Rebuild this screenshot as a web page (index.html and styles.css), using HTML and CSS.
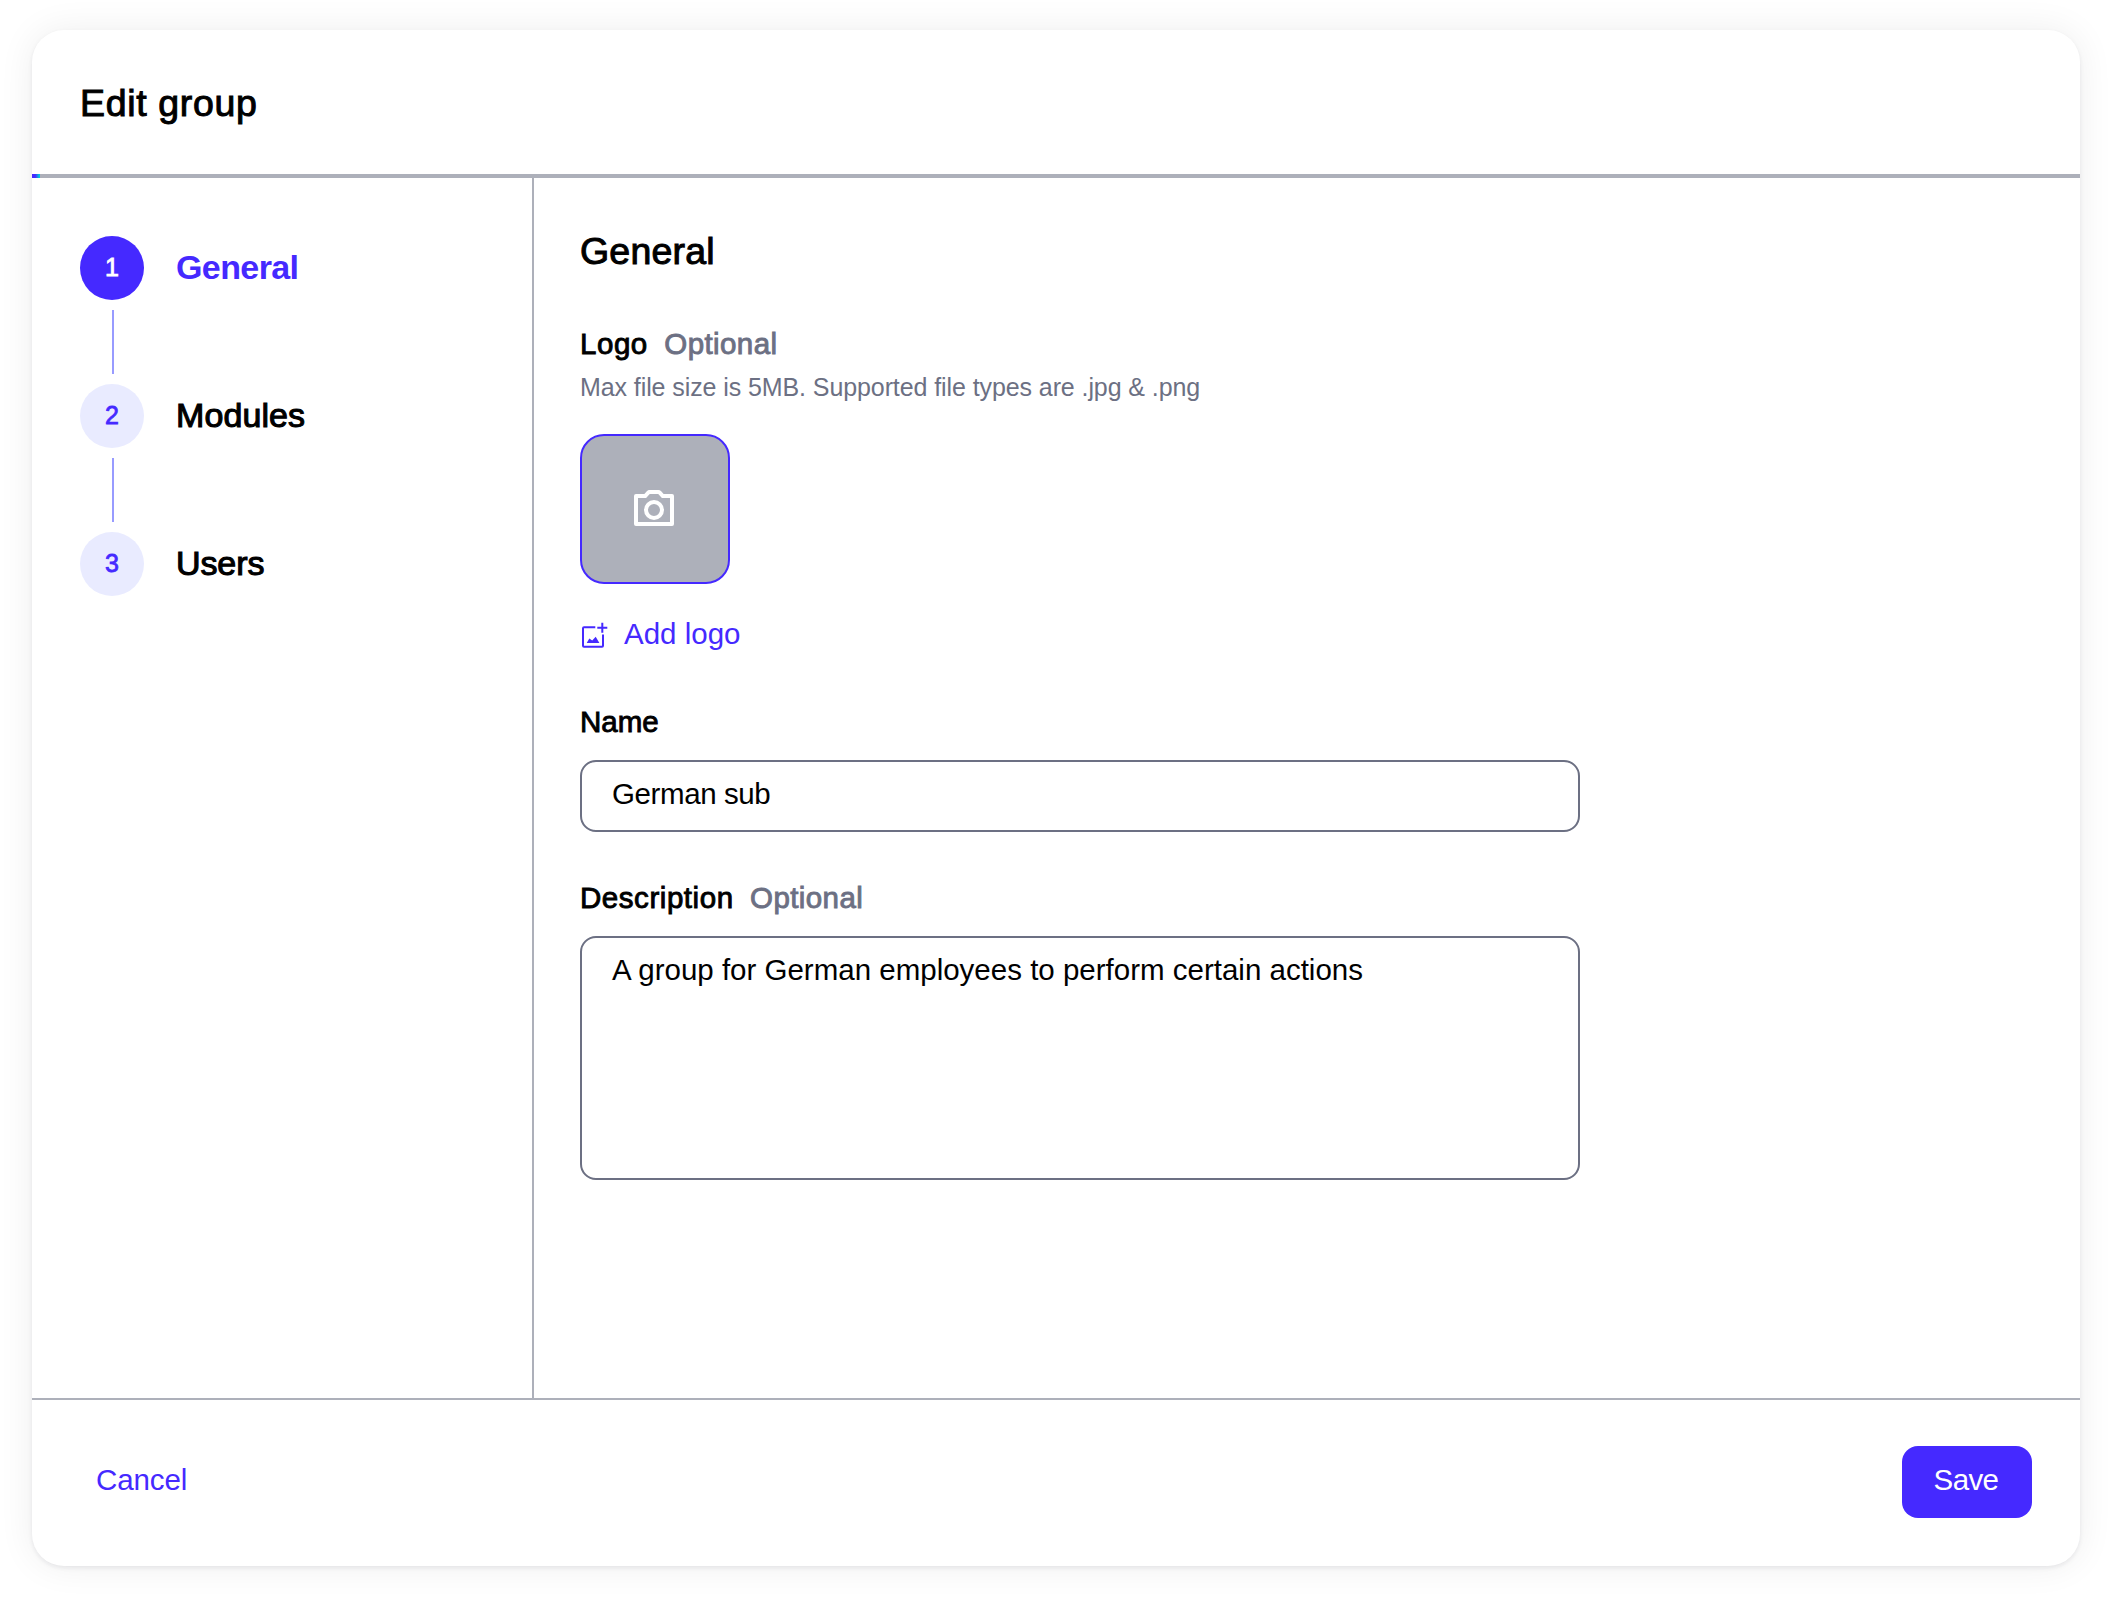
FILE: index.html
```html
<!DOCTYPE html>
<html lang="en">
<head>
<meta charset="utf-8">
<title>Edit group</title>
<link rel="stylesheet" href="styles.css">
</head>
<body>
<main class="card">
  <header class="card-header"><h1 class="title">Edit group</h1></header>
  <div class="progress"><div class="progress-fill"></div></div>
  <div class="body">
    <nav class="steps">
      <div class="step active"><span class="badge">1</span><span class="step-label">General</span></div>
      <div class="connector"></div>
      <div class="step"><span class="badge">2</span><span class="step-label">Modules</span></div>
      <div class="connector"></div>
      <div class="step"><span class="badge">3</span><span class="step-label step-users">Users</span></div>
    </nav>
    <section class="content">
      <h2 class="title">General</h2>
      <div class="label logo-label"><span class="wide">Logo</span><span class="optional">Optional</span></div>
      <p class="hint">Max file size is 5MB. Supported file types are .jpg &amp; .png</p>
      <div class="logo-tile">
        <svg class="camera" viewBox="0 0 24 24" fill="#fff"><path d="M21 5h-4.170l-1.240-1.350A2 2 0 0 0 14.120 3H9.880c-.56 0-1.100.24-1.480.65L7.170 5H3a1 1 0 0 0-1 1v14a1 1 0 0 0 1 1h18a1 1 0 0 0 1-1V6a1 1 0 0 0-1-1zm-1 14H4V7h4.050l1.830-2h4.240l1.830 2H20v12zM12 8a5 5 0 1 0 0 10 5 5 0 0 0 0-10zm0 8a3 3 0 1 1 0-6 3 3 0 0 1 0 6z"/></svg>
      </div>
      <button class="add-logo">
        <svg class="add-icon" viewBox="0 0 28 28"><path d="M15.300 7.300H4a1 1 0 0 0-1 1v17.400a1 1 0 0 0 1 1h18a1 1 0 0 0 1-1V14.500M17.300 7.700h10M22.300 2.700v10" fill="none" stroke="currentColor" stroke-width="2"/><path d="M6.700 23l2.600-4.600 2.900 2.200 3.500-3.800 3.700 6.200z" fill="currentColor"/></svg>
        <span>Add logo</span>
      </button>
      <label class="label" for="name">Name</label>
      <input class="field name-field" id="name" value="German sub">
      <label class="label desc-label" for="desc"><span class="wide">Description</span><span class="optional">Optional</span></label>
      <textarea class="field desc-field" id="desc">A group for German employees to perform certain actions</textarea>
    </section>
  </div>
  <footer class="card-footer">
    <button class="cancel">Cancel</button>
    <button class="save">Save</button>
  </footer>
</main>
</body>
</html>
```
FILE: styles.css
```css
* { box-sizing: border-box; margin: 0; padding: 0; }
body {
  background: #fff;
  color: #000;
  font-family: "Liberation Sans", sans-serif;
  font-size: 29.5px;
  padding: 30px 32px 34px;
}
button { font: inherit; border: 0; background: none; color: #4529ff; }
.card {
  display: flex;
  flex-direction: column;
  height: 1536px;
  border-radius: 32px;
  background: #fff;
  box-shadow: 0 2px 4px rgba(20, 24, 50, .08), 0 0 36px rgba(0, 0, 0, .07);
}
.card-header { height: 144px; padding: 50px 48px 0; }
.title { font-size: 37.5px; line-height: 46px; font-weight: 400; letter-spacing: .2px; -webkit-text-stroke: 1px currentColor; }
.card-header .title { letter-spacing: .65px; }
.progress { height: 4px; background: #adb0ba; }
.progress-fill { width: 8px; height: 4px; background: linear-gradient(90deg, #4529ff 0 40%, #00c8d8 90%); }
.body { display: flex; flex: 1; }
.steps { width: 502px; border-right: 2px solid #adb0ba; padding: 58px 48px; }
.step { display: flex; align-items: center; gap: 32px; }
.badge {
  width: 64px;
  height: 64px;
  border-radius: 50%;
  background: #e9ebff;
  color: #4529ff;
  font-size: 25px;
  line-height: 62px;
  text-align: center;
  -webkit-text-stroke: .8px currentColor;
}
.step-label { font-size: 34px; line-height: 62px; height: 64px; letter-spacing: .1px; -webkit-text-stroke: 1.1px currentColor; }
.step-users { letter-spacing: -.1px; }
.active .badge { background: #4529ff; color: #fff; }
.active .step-label { color: #4529ff; font-weight: 700; letter-spacing: -.6px; -webkit-text-stroke: 0; }
.connector { width: 2px; height: 64px; margin: 10px 0 10px 32px; background: #989bff; }
.content { width: 1046px; padding: 50px 0 0 46px; display: flex; flex-direction: column; }
.label { display: flex; gap: 16.5px; line-height: 36px; height: 36px; -webkit-text-stroke: .9px currentColor; }
.wide { letter-spacing: .55px; }
.optional { color: #6c7083; letter-spacing: .4px; }
.logo-label { margin-top: 52px; }
.hint { font-size: 25px; line-height: 30px; margin-top: 10px; color: #6c7083; letter-spacing: -.09px; }
.logo-tile { width: 150px; height: 150px; margin-top: 32px; padding: 48px; border: 2px solid #4529ff; border-radius: 24px; background: #adb0ba; }
.camera { display: block; width: 48px; height: 48px; }
.add-logo { display: flex; align-items: center; gap: 16px; height: 36px; margin: 32px 0 52px; }
.add-icon { width: 28px; height: 28px; }
.field {
  width: 1000px;
  border: 2px solid #6c7083;
  border-radius: 16px;
  padding: 0 30px;
  font: inherit;
  color: #000;
  background: #fff;
  outline: 0;
  resize: none;
}
.name-field { height: 72px; margin-top: 20px; padding-bottom: 4px; letter-spacing: -.4px; }
.desc-label { margin-top: 48px; }
.desc-field { height: 244px; margin-top: 20px; padding-top: 14px; line-height: 36px; }
.card-footer { display: flex; justify-content: space-between; height: 168px; padding: 46px 48px; border-top: 2px solid #adb0ba; }
.cancel { height: 72px; padding: 0 16px 4px; letter-spacing: -.1px; }
.save { width: 130px; height: 72px; padding: 0 2px 4px 0; border-radius: 16px; background: #4529ff; color: #fff; letter-spacing: -.6px; }
```
